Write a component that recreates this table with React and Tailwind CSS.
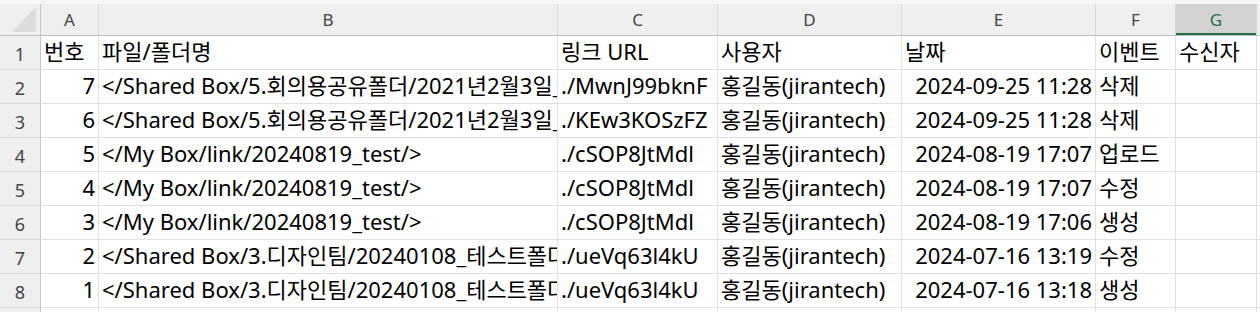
import React from 'react';

const cols = ['A', 'B', 'C', 'D', 'E', 'F', 'G'];

const headerRow = ['번호', '파일/폴더명', '링크 URL', '사용자', '날짜', '이벤트', '수신자'];

const shared5 = '</Shared Box/5.회의용공유폴더/2021년2월3일_회의자료/>';
const myBox = '</My Box/link/20240819_test/>';
const shared3 = '</Shared Box/3.디자인팀/20240108_테스트폴더/>';
const user = '홍길동(jirantech)';

const rows = [
    [7, shared5, './MwnJ99bknF', user, '2024-09-25 11:28', '삭제'],
    [6, shared5, './KEw3KOSzFZ', user, '2024-09-25 11:28', '삭제'],
    [5, myBox, './cSOP8JtMdl', user, '2024-08-19 17:07', '업로드'],
    [4, myBox, './cSOP8JtMdl', user, '2024-08-19 17:07', '수정'],
    [3, myBox, './cSOP8JtMdl', user, '2024-08-19 17:06', '생성'],
    [2, shared3, './ueVq63l4kU', user, '2024-07-16 13:19', '수정'],
    [1, shared3, './ueVq63l4kU', user, '2024-07-16 13:18', '생성'],
];

const grid = 'grid grid-cols-[41px_58px_459px_160px_184px_194px_80px_81px_1fr]';
const cell = 'h-[34px] border-r border-b border-[#e1e1e1] overflow-hidden whitespace-nowrap px-[3px] text-[22px] leading-[30px] text-black';
const rowHead = 'h-[34px] bg-[#efefef] border-r border-r-[#c6c6c6] border-b border-b-[#d9d9d9] flex items-center justify-center pt-1 text-[18px] text-[#444]';

const App = () => {
    return (
        <div className="w-[1260px] h-[312px] overflow-hidden bg-white" style={{ fontFamily: '"Noto Sans", "Noto Sans CJK KR", sans-serif' }}>
            {/* top strip */}
            <div className="h-[4px] bg-[#f6f6f6]" />

            {/* column letters */}
            <div className={`${grid} h-[32px] bg-[#efefef] border-b border-[#bfbfbf]`}>
                <div className="relative border-r border-[#c6c6c6]">
                    <svg width="40" height="31" className="absolute left-0 top-0">
                        <polygon points="12,28 36,3 36,28" fill="#dcdcdc" />
                    </svg>
                </div>
                {cols.map((c) => (
                    <div
                        key={c}
                        className={`flex items-center justify-center border-r border-[#d9d9d9] text-[17px] ${c === 'G'
                            ? 'bg-[#d3d3d3] text-[#217346] shadow-[inset_0_-2px_0_#217346]'
                            : 'text-[#444]'
                            }`}
                    >
                        {c}
                    </div>
                ))}
                <div />
            </div>

            {/* row 1: titles */}
            <div className={grid}>
                <div className={rowHead}>1</div>
                {headerRow.map((t, i) => (
                    <div key={i} className={cell}>{t}</div>
                ))}
                <div className="h-[34px] border-b border-[#e1e1e1]" />
            </div>

            {rows.map((r, i) => (
                <div key={i} className={grid}>
                    <div className={rowHead}>{i + 2}</div>
                    <div className={`${cell} text-right`}>{r[0]}</div>
                    <div className={cell}>{r[1]}</div>
                    <div className={cell}>{r[2]}</div>
                    <div className={cell}>{r[3]}</div>
                    <div className={`${cell} text-right`}>{r[4]}</div>
                    <div className={cell}>{r[5]}</div>
                    <div className={cell} />
                    <div className="h-[34px] border-b border-[#e1e1e1]" />
                </div>
            ))}

            {/* row 9 (cut off) */}
            <div className={grid}>
                <div className={rowHead}>9</div>
                {cols.map((c) => (
                    <div key={c} className={cell} />
                ))}
                <div />
            </div>
        </div>
    );
};

export default App;
